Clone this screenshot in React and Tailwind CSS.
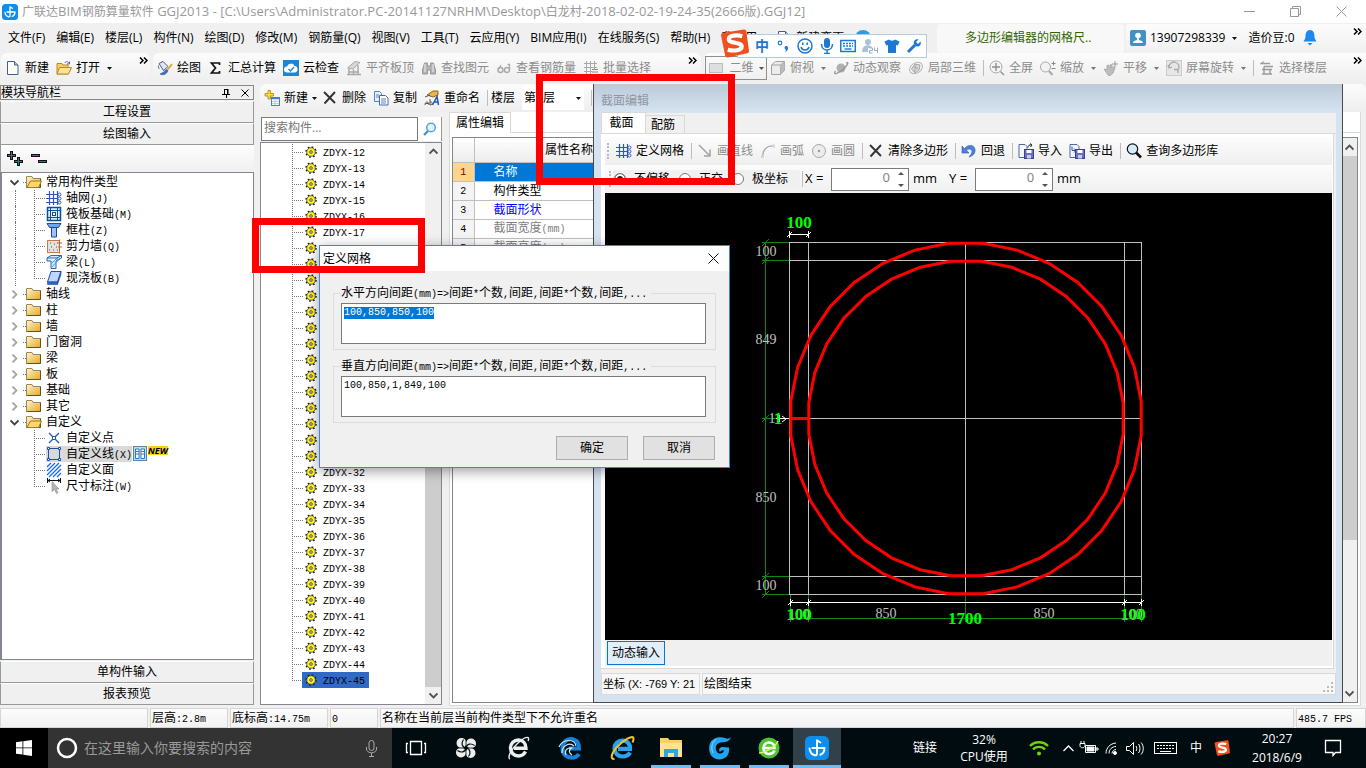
import React, { useEffect, useRef } from "react";

/* ---------- text ---------- */

// Chinese at 12px with half-width Latin runs, as in a bitmap system font.
function Sim({ children }) {
  const parts = String(children).match(/[\x20-\x7e]+|[^\x20-\x7e]+/g) || [];
  return (
    <span className="whitespace-pre">
      {parts.map((p, i) =>
        /^[\x20-\x7e]/.test(p) ? (
          <span key={i} className="font-['Liberation_Mono',monospace] text-[10px]">{p}</span>
        ) : (
          <span key={i}>{p}</span>
        )
      )}
    </span>
  );
}

/* ---------- icons ---------- */

function Svg({ children, size = 16, className = "" }) {
  return (
    <svg width={size} height={size} viewBox="0 0 16 16" fill="none" className={"shrink-0 " + className} aria-hidden="true">
      {children}
    </svg>
  );
}

const Caret = ({ color = "#111" }) => (
  <svg width="5" height="3" viewBox="0 0 5 3" className="shrink-0" aria-hidden="true">
    <path d="M0 0h5L2.5 3z" fill={color} />
  </svg>
);

const More = ({ label }) => (
  <button type="button" aria-label={label} className="mt-1 self-start">
    <svg width="9" height="7" viewBox="0 0 9 7" fill="none" stroke="#000" strokeWidth="1.5" aria-hidden="true">
      <path d="M1 .5l3 3-3 3M5 .5l3 3-3 3" />
    </svg>
  </button>
);

const AppLogo = ({ size = 16 }) => (
  <Svg size={size}>
    <rect width="16" height="16" rx="3.5" fill="#0a8fee" />
    <path d="M10.300 4.300L8 2.800v8.700c0 1-.6 1.500-1.500 1.300C4.500 12.300 3.200 10.500 3 8.300" stroke="#fff" strokeWidth="1.300" strokeLinecap="round" strokeLinejoin="round" />
    <path d="M5 8h8c0 2.200-1 3.800-2.800 4.500" stroke="#fff" strokeWidth="1.300" strokeLinecap="round" strokeLinejoin="round" />
  </Svg>
);

const NewDoc = () => (
  <Svg>
    <path d="M2.500 1.500h7l3.500 3.500v9.500h-10.500z" fill="#fff" stroke="#41608f" />
    <path d="M9.500 1.500v3.500h3.500" fill="#b7c9e6" stroke="#41608f" />
  </Svg>
);

const OpenDoc = () => (
  <Svg>
    <path d="M1 3.500h5l1 1.500h5v9H1z" fill="#f6d06a" stroke="#b98a1e" />
    <path d="M1 14l2.500-6.500H15.500L12.500 14z" fill="#ffe39a" stroke="#b98a1e" />
    <path d="M8.500 3c1.500-2 4-1.500 4.500.5M13.500 1.500v2.500h-2.500" stroke="#4b6ea8" />
  </Svg>
);

const PaintIcon = () => (
  <Svg>
    <path d="M2 3.500l4-2 5 5-4.500 4z" fill="#dfe7f3" stroke="#4a5d84" />
    <path d="M1.500 5.500c-.5 2 .5 3 1 3.500" stroke="#4a5d84" />
    <path d="M15 4l-5.500 7" stroke="#e0a63a" strokeWidth="2" />
    <path d="M3 14c2 1.500 6 1 8-3l-2-1.500c-2 3-4 3.500-6 4.500z" fill="#3e6fd0" stroke="#2b4e9b" strokeWidth=".6" />
  </Svg>
);

const Sigma = () => (
  <Svg>
    <path d="M11.500 5V3H3.500l4 5-4 5h8v-2" stroke="#111" strokeWidth="1.700" />
  </Svg>
);

const CloudCheck = () => (
  <Svg>
    <rect width="16" height="16" fill="#1d86d4" />
    <path d="M4 12.500a3 3 0 010-6 4 4 0 017.500-.5 3.300 3.300 0 01.5 6.500z" fill="#fff" />
    <path d="M5.500 9l2 2 3.500-4" stroke="#1d86d4" strokeWidth="1.300" />
  </Svg>
);

const G = "#a9a9a9";
const AlignSlab = () => (
  <Svg>
    <path d="M1.500 8L9 1.500l5 1L7 9z" fill="#d6d6d6" stroke={G} />
    <path d="M1 14.500h14M3 9v5M7.500 9.500v5M12 5v9M3 12h10" stroke={G} strokeWidth="1.500" />
  </Svg>
);
const Binoculars = () => (
  <Svg>
    <path d="M3.500 3h3v3h3V3h3l2 7v4h-5v-4h-3v4h-5v-4z" fill="#b3b3b3" stroke="#999" />
    <path d="M4 4v8M12 4v8" stroke="#eee" />
  </Svg>
);
const Glasses = () => (
  <Svg>
    <circle cx="4.500" cy="10" r="2.500" stroke={G} strokeWidth="1.400" />
    <circle cx="11" cy="10" r="2.500" stroke={G} strokeWidth="1.400" />
    <path d="M2 10l3-5M13.500 10V4.500h-2" stroke={G} strokeWidth="1.300" />
  </Svg>
);
const BatchSelect = () => (
  <Svg>
    <path d="M3.500 1v14M7.500 1v14M11.500 1v9M1 3.500h13M1 7.500h13M1 11.500h8" stroke={G} />
    <path d="M9 9.500h6M9 12h6M9 14.500h6" stroke="#888" />
  </Svg>
);
const FlatRect = () => (
  <Svg><rect x="1.500" y="3.500" width="13" height="9" fill="#dedede" stroke="#bcbcbc" /></Svg>
);
const CubeIcon = () => (
  <Svg>
    <path d="M1.500 5l4-3.500h9v9l-4 4h-9zM1.500 5h9v9.500M10.500 5l4-3.500" fill="#ececec" stroke="#a3a3a3" />
    <path d="M10.500 5l4-3.500v9l-4 4z" fill="#bbb" />
  </Svg>
);
const Planet = () => (
  <Svg>
    <circle cx="8" cy="8" r="4.500" fill="#b0b0b0" />
    <path d="M13 3c2-1 2.500 0 1 2-2.500 3.500-7 7-10.500 8.500-2 .8-2.500-.5-1-2.500" stroke="#979797" strokeWidth="1.300" />
  </Svg>
);
const Local3d = () => (
  <Svg>
    <ellipse cx="8" cy="8" rx="7" ry="5" transform="rotate(-35 8 8)" stroke="#b5b5b5" />
    <path d="M3.500 9l3.500-5 5 1-1 5-4 3z" fill="#d9d9d9" stroke={G} />
    <path d="M5 6.500l5 2M8 4.500L6.500 12" stroke={G} />
  </Svg>
);
const ZoomFit = () => (
  <Svg>
    <circle cx="7" cy="7" r="6" fill="#f4f4f4" stroke={G} />
    <path d="M7 3v8M3 7h8M11.500 11.500L15 15" stroke="#8e8e8e" strokeWidth="1.400" />
  </Svg>
);
const ZoomInOut = () => (
  <Svg>
    <circle cx="5.500" cy="7" r="5" fill="#f2f2f2" stroke={G} />
    <path d="M9 11l3.500 4" stroke={G} strokeWidth="2" />
    <path d="M11.500 3.500h4M13.500 1.500v4M11.500 8.500h4" stroke="#888" />
  </Svg>
);
const PanHand = () => (
  <Svg>
    <path d="M1 9l3 1V5.500l1.500-.5 1 3 1-3.500 1.500.5v3.500l2-2 1 1-2 5.500-3 2.500H5.500z" fill="#bdbdbd" stroke={G} />
    <path d="M12 1v6M9 4h6" stroke="#999" />
  </Svg>
);
const RotateScreen = () => (
  <Svg>
    <rect x=".5" y=".5" width="15" height="15" fill="#e6e6e6" stroke="#ccc" />
    <path d="M3 7a5 5 0 119 3M2 5l1 3 3-1M12 13v-3.500H8" stroke="#aaa" strokeWidth="1.300" />
  </Svg>
);
const Floors = () => (
  <Svg>
    <path d="M2 3.500h9M5 6.500h9M3 9.500h10M3 14h10M5 6.500v7M11 9.500v4" stroke="#9b9b9b" strokeWidth="1.400" />
    <path d="M5 1.500L1 4" stroke="#9b9b9b" />
  </Svg>
);
const AddItem = () => (
  <Svg>
    <path d="M4 .5h2.500v3H9.500V6H6.500v3H4V6H1V3.500h3z" fill="#ffd92e" stroke="#a8871a" strokeWidth=".8" />
    <rect x="7.500" y="7.500" width="8" height="8" fill="#fff" stroke="#4e7cc8" />
    <path d="M8 8.500h7" stroke="#4e7cc8" strokeWidth="1.500" />
    <path d="M8 11.500h7M8 13.500h7M11 10v5" stroke="#b8cdee" />
  </Svg>
);
const Cross = () => (
  <Svg>
    <path d="M2 2l11 11M13 2L2.500 13.500" stroke="#333" strokeWidth="1.900" />
  </Svg>
);
const CopyIcon = () => (
  <Svg>
    <path d="M1.500 1.500h5l2 2v8h-7z" fill="#e7f0fd" stroke="#5b83c4" />
    <path d="M6.500 5.500h6l2.500 2.500v7H6.500z" fill="#fff" stroke="#3f6bb5" />
    <path d="M8 9h5M8 11h5M8 13h5M3 5h3M3 7h3" stroke="#5b83c4" />
  </Svg>
);
const RenameIcon = () => (
  <Svg>
    <path d="M3 5l6-4h5v4L9 7z" fill="#e9b54a" stroke="#8a6720" />
    <path d="M1 7l5-2" stroke="#555" />
    <path d="M1 15c0-4 4-4 4 0M1.500 13.500h3.500M6 9v6c3 0 3-3.500 0-3" stroke="#555" />
    <path d="M8.500 15L13 6.500 14.500 15M10 12h4" stroke="#2457b8" strokeWidth="1.500" />
  </Svg>
);
const GridIcon = () => (
  <Svg>
    <path d="M3.500 1v14M7.500 1v14M11.500 1v14M0 4.500h12M0 8.500h12M0 12.500h12" stroke="#2d59b3" strokeWidth="1.200" />
    <circle cx="13.500" cy="4.500" r="1.500" fill="#fff" stroke="#2d59b3" />
    <circle cx="13.500" cy="8.500" r="1.500" fill="#fff" stroke="#2d59b3" />
    <circle cx="13.500" cy="12.500" r="1.500" fill="#fff" stroke="#2d59b3" />
  </Svg>
);
const LineIcon = () => (
  <Svg><path d="M2 2l10 10M13 6.500V13H7" stroke="#a3a3a3" strokeWidth="1.500" /></Svg>
);
const ArcIcon = () => (
  <Svg>
    <path d="M2.500 13.500C2.500 7 7 2.500 13 3" stroke="#a8a8a8" strokeWidth="1.300" />
    <path d="M1 12h3v3H1zM12 1.500h3v3h-3z" fill="#d5d5d5" />
  </Svg>
);
const CircleIcon = () => (
  <Svg><circle cx="8" cy="8" r="6.500" fill="#ececec" stroke="#a8a8a8" /><circle cx="8" cy="8" r="1.200" fill="#999" /></Svg>
);
const UndoIcon = () => (
  <Svg>
    <path d="M1 3v7h7L5.500 7.500C8 5 11 6 11 8.500c0 2-1.500 3.500-3 5.500 4-1 6.500-4 6-7.500C13.500 2 7.500.5 3.500 5.500z" fill="#4d7fe0" stroke="#2c56a8" strokeWidth=".6" />
  </Svg>
);
const Disk = () => (
  <>
    <rect x="6.500" y="6.500" width="9" height="9" fill="#6a6fc4" stroke="#3a3f8f" />
    <path d="M8.500 7h5v3h-5z" fill="#fff" />
    <path d="M9 12h4v3.500H9z" fill="#c9cdf2" />
  </>
);
const ImportIcon = () => (
  <Svg>
    <path d="M1 1.500h6l2 2v11H1z" fill="#f3f7ff" stroke="#4d679b" />
    <Disk />
    <path d="M10 4.500c0-2 1.500-3 3.500-2.500M12 .5L14 2l-1.500 2" stroke="#223" />
  </Svg>
);
const ExportIcon = () => (
  <Svg>
    <path d="M1 1.500h7l2 2v11H1z" fill="#f3f7ff" stroke="#4d679b" />
    <path d="M3 3.500v4h3M5 5.500l2 2-2 2" stroke="#2b50a0" />
    <Disk />
  </Svg>
);
const LoupeIcon = () => (
  <Svg>
    <circle cx="6.500" cy="6" r="5.200" fill="#d5ecfb" stroke="#111" strokeWidth="1.200" />
    <path d="M10 9.500l5 5" stroke="#111" strokeWidth="2.600" />
  </Svg>
);
const Gear = () => (
  <svg width="12" height="12" viewBox="0 0 12 12" className="shrink-0" aria-hidden="true">
    <circle cx="6" cy="6" r="5" fill="none" stroke="#222" strokeWidth="1.600" strokeDasharray="1.700 2.227" />
    <circle cx="6" cy="6" r="4.300" fill="#fff01c" stroke="#333" strokeWidth=".7" />
    <circle cx="6" cy="6" r="1.300" fill="#fff" stroke="#222" strokeWidth=".8" />
  </svg>
);
const Folder = ({ open }) => (
  <Svg>
    <defs>
      <linearGradient id="folderFill" x1="0" y1="0" x2="1" y2="1">
        <stop offset="0" stopColor="#fff6cf" />
        <stop offset="1" stopColor="#e5a728" />
      </linearGradient>
    </defs>
    <path d="M.5 2.500h5.500l1 2h7.500v9H.5z" fill="url(#folderFill)" stroke="#9b8a5c" />
    <path d="M.5 13.500h14v-9" stroke="#6b5318" />
    {open && <path d="M1 13.500l3.500-6.500h11l-3 6.500z" fill="#ffd766" stroke="#9b7a2a" />}
  </Svg>
);

const typeIcons = {
  axis: <GridIcon />,
  raft: (
    <Svg>
      <rect x="1.500" y="1.500" width="13" height="13" fill="#e4edfb" stroke="#0f4f93" strokeWidth="1.500" />
      <path d="M4.500 2v12M11.500 2v12M2 4.500h12M2 11.500h12" stroke="#0f4f93" />
      <rect x="6.500" y="6.500" width="3" height="3" fill="#fff" stroke="#0f4f93" />
    </Svg>
  ),
  column: (
    <Svg>
      <path d="M1 1.500h14l-2.500 4h-9z" fill="#6fa4ee" stroke="#1d49a0" />
      <path d="M5.500 5.500h5v9.500h-5z" fill="#9cc1f7" stroke="#1d49a0" />
    </Svg>
  ),
  wall: (
    <Svg>
      <rect x="1.500" y="2.500" width="12" height="12" fill="#e2e2e2" stroke="#c8794a" />
      <path d="M4 5h1M8 6h1M5 9h1M10 9h1M7 12h1M3 12h1M11 5h1M11 12h1" stroke="#555" />
      <path d="M13.500 1.500v14M12 5h4M12 9h4" stroke="#c8622a" />
    </Svg>
  ),
  beam: (
    <Svg>
      <path d="M1 4l4-2.500h10.500L11 4zM11 4v3l4.500-3V1.500M1 4v3h4v7.500h5V7h1" fill="#d6e9fc" stroke="#2567b8" />
      <path d="M6 13l8-9M6 9l5-5" stroke="#4d93dc" />
    </Svg>
  ),
  slab: (
    <Svg>
      <path d="M5 1.500h10L11.500 12H1.500z" fill="#bcd7fb" stroke="#1f4fa8" />
      <path d="M1.500 12h10v2.500h-10zM11.500 12L15 1.500v3l-3.500 10z" fill="#2f66c8" stroke="#1f4fa8" strokeWidth=".6" />
    </Svg>
  ),
  point: (
    <Svg>
      <path d="M3 3l3.500 3.500M13 3L9.500 6.500M3 13l3.500-3.500M13 13L9.500 9.500" stroke="#1d5aa8" strokeWidth="1.300" />
      <rect x="6.500" y="6.500" width="3" height="3" fill="#fff" stroke="#1d5aa8" />
    </Svg>
  ),
  line: (
    <Svg>
      <path d="M2.500 2.500h11v11h-11z" stroke="#1b50b0" />
      <path d="M1.500 1.500h2v2h-2zM12.500 1.500h2v2h-2zM1.500 12.500h2v2h-2zM12.500 12.500h2v2h-2z" fill="#fff" stroke="#1b50b0" />
    </Svg>
  ),
  area: (
    <Svg>
      <path d="M1 5l4-4M1 9l8-8M1 13L13 1M3 15L15 3M7 15l8-8M11 15l4-4" stroke="#1e6fd8" strokeWidth="1.300" />
    </Svg>
  ),
  dim: (
    <Svg>
      <path d="M1.500 0v5M14.500 0v5M2 2.500h12M4 1L2 2.500 4 4M12 1l2 1.500L12 4" stroke="#111" />
      <path d="M6 3.500v10l2.500-2 2 4 1.500-1-2-3.500h3z" fill="#b5b5b5" stroke="#8a8a8a" strokeWidth=".6" />
    </Svg>
  ),
};

/* ---------- title, menus, main toolbar ---------- */

function TitleBar() {
  const title = "广联达BIM钢筋算量软件 GGJ2013 - [C:\\Users\\Administrator.PC-20141127NRHM\\Desktop\\白龙村-2018-02-02-19-24-35(2666版).GGJ12]";
  const parts = title.match(/[\x20-\x7e]+|[^\x20-\x7e]+/g);
  return (
    <header className="flex h-[23px] shrink-0 items-center gap-1 bg-white pl-0.5 text-[#999]">
      <AppLogo />
      <h1 className="flex-1 whitespace-pre text-xs">
        {parts.map((p, i) => (
          <span key={i} className={/^[\x20-\x7e]/.test(p) ? "text-[13px]" : "text-xs"}>{p}</span>
        ))}
      </h1>
      <div className="flex items-center gap-[35px] pr-[19px]">
        <button type="button" aria-label="最小化">
          <svg width="11" height="11" stroke="#999" fill="none"><path d="M0 5.500h11" /></svg>
        </button>
        <button type="button" aria-label="还原">
          <svg width="11" height="11" stroke="#999" fill="none"><path d="M.5 2.500h8v8h-8zM2.500 2.500v-2h8v8h-2" /></svg>
        </button>
        <button type="button" aria-label="关闭">
          <svg width="11" height="11" stroke="#999" fill="none"><path d="M.5.5l10 10M10.500.5l-10 10" /></svg>
        </button>
      </div>
    </header>
  );
}

const menus = ["文件(F)", "编辑(E)", "楼层(L)", "构件(N)", "绘图(D)", "修改(M)", "钢筋量(Q)", "视图(V)", "工具(T)", "云应用(Y)", "BIM应用(I)", "在线服务(S)", "帮助(H)"];

function MenuBar() {
  return (
    <div className="flex h-[30px] shrink-0 items-center text-xs">
      <nav className="flex w-[937px] items-center gap-[11px] whitespace-nowrap pl-2">
        {menus.map((m) => (
          <button key={m} type="button">{m}</button>
        ))}
        <button type="button">我要用</button>
        <button type="button" className="flex items-center gap-1 pl-2"><NewDoc />新建变更</button>
        <span className="h-4 w-4 rounded-full bg-[#2a9de0]" />
      </nav>
      <a href="#tip" className="mr-0.5 flex h-[29px] w-[187px] items-center whitespace-nowrap rounded bg-[#f8f8f8] pl-7 text-[#336600]">
        多边形编辑器的网格尺..
      </a>
      <div className="flex h-[29px] flex-1 items-center gap-[7px] rounded-l bg-linear-to-b from-[#fcfcfc] to-[#f0f0f0] pl-1">
        <span className="flex items-center gap-1">
          <Svg>
            <rect width="16" height="16" rx="2" fill="#3e92c4" />
            <circle cx="8" cy="5.500" r="2.800" fill="#fff" />
            <path d="M3 13c0-4 10-4 10 0zM7 8h2v2H7z" fill="#fff" />
          </Svg>
          13907298339
        </span>
        <Caret />
        <span className="pl-1">造价豆:0</span>
        <svg width="16" height="16" viewBox="0 0 16 16" aria-hidden="true">
          <path d="M8 0c3.500 0 4.500 3 4.500 7 0 2 1.500 3 2 4.500h-13C2 10 3.500 9 3.500 7 3.500 3 4.500 0 8 0z" fill="#1e88f0" />
          <path d="M5.500 13h5L8 15.500z" fill="#1e88f0" />
        </svg>
        <span className="flex flex-1 justify-end self-stretch pr-1"><More label="更多菜单" /></span>
      </div>
    </div>
  );
}

function Tool({ icon, children, dim, caret }) {
  return (
    <>
      <button type="button" className={"flex items-center gap-1 whitespace-nowrap " + (dim ? "text-[#8c8c8c]" : "text-black")}>
        {icon}
        {children}
      </button>
      {caret && <Caret color={dim ? "#777" : "#111"} />}
    </>
  );
}
const Sep = () => <span className="-mr-0.5 h-4 w-px shrink-0 bg-[#bdbdbd]" />;
const strip = "flex items-center gap-[7px] bg-linear-to-b from-[#fcfcfc] to-[#eeeeee]";

function MainToolbar() {
  return (
    <div className="mb-px flex h-[30px] shrink-0 gap-[3px] overflow-hidden pl-px text-xs">
      <div className={strip + " w-[149px] rounded-md pl-1 pr-0.5"}>
        <Tool icon={<NewDoc />}>新建</Tool>
        <Tool icon={<OpenDoc />} caret>打开</Tool>
        <span className="flex flex-1 justify-end self-stretch"><More label="更多文件工具" /></span>
      </div>
      <div className={strip + " w-[548px] rounded-md pl-1 pr-1"}>
        <Tool icon={<PaintIcon />}>绘图</Tool>
        <Tool icon={<Sigma />}>汇总计算</Tool>
        <Tool icon={<CloudCheck />}>云检查</Tool>
        <Tool icon={<AlignSlab />} dim>平齐板顶</Tool>
        <Tool icon={<Binoculars />} dim>查找图元</Tool>
        <Tool icon={<Glasses />} dim>查看钢筋量</Tool>
        <Tool icon={<BatchSelect />} dim>批量选择</Tool>
        <span className="flex flex-1 justify-end self-stretch"><More label="更多绘图工具" /></span>
      </div>
      <div className={strip + " flex-1 rounded-l-md pl-px pr-1"}>
        <button type="button" className="-mr-1 flex h-6 w-[62px] shrink-0 items-center justify-between whitespace-nowrap border border-[#8e8e8e] px-0.5 text-[#8c8c8c]">
          <FlatRect />二维<Caret color="#555" />
        </button>
        <Tool icon={<CubeIcon />} dim caret>俯视</Tool>
        <Tool icon={<Planet />} dim>动态观察</Tool>
        <Tool icon={<Local3d />} dim>局部三维</Tool>
        <Sep />
        <Tool icon={<ZoomFit />} dim>全屏</Tool>
        <Tool icon={<ZoomInOut />} dim caret>缩放</Tool>
        <Tool icon={<PanHand />} dim caret>平移</Tool>
        <Tool icon={<RotateScreen />} dim caret>屏幕旋转</Tool>
        <Sep />
        <Tool icon={<Floors />} dim>选择楼层</Tool>
        <span className="flex flex-1 justify-end self-stretch"><More label="更多视图工具" /></span>
      </div>
    </div>
  );
}

/* ---------- navigation panel ---------- */

const common = [
  ["轴网(J)", "axis"], ["筏板基础(M)", "raft"], ["框柱(Z)", "column"],
  ["剪力墙(Q)", "wall"], ["梁(L)", "beam"], ["现浇板(B)", "slab"],
];
const folders = ["轴线", "柱", "墙", "门窗洞", "梁", "板", "基础", "其它"];
const custom = [["自定义点", "point"], ["自定义线(X)", "line"], ["自定义面", "area"], ["尺寸标注(W)", "dim"]];

function Branch({ last }) {
  return (
    <svg width="12" height="16" className="shrink-0" stroke="#777" strokeDasharray="1 1" aria-hidden="true">
      <path d={last ? "M.5 0v8" : "M.5 0v16"} />
      <path d="M0 8.500h11" />
    </svg>
  );
}

function FolderRow({ open, children }) {
  return (
    <li className="flex h-4 items-center gap-1">
      <button type="button" className="flex items-center">
        <svg width="9" height="9" viewBox="0 0 9 9" fill="none" stroke={open ? "#404040" : "#a6a6a6"} strokeWidth="1.800" aria-hidden="true">
          <path d={open ? "M.5 2.500l4 4 4-4" : "M2.500.5l4 4-4 4"} />
        </svg>
        <span className="ml-1 w-[3px] border-t border-dotted border-[#777]" />
        <Folder open={open} />
      </button>
      <Sim>{children}</Sim>
    </li>
  );
}

function TypeRow({ label, icon, last, guide }) {
  const selected = icon === "line";
  return (
    <li className="flex h-4 items-center">
      <span className={"ml-[5px] mr-[18px] self-stretch border-l " + (guide ? "border-dotted border-[#777]" : "border-transparent")} />
      <Branch last={last} />
      <span className={"flex h-4 items-center gap-1 " + (selected ? "bg-[#d9d9d9]" : "")}>
        {typeIcons[icon]}
        <Sim>{label}</Sim>
      </span>
      {selected && (
        <>
          <Svg>
            <rect x="1.500" y=".5" width="13" height="14" fill="#b9dcf8" stroke="#64849c" />
            <path d="M3.500 3h3.500v9.500H3.500zM9 3h3.500v9.500H9z" fill="#fff" stroke="#1c7fd6" />
            <path d="M4 5.500h3M4 8h3M9.500 5.500h3M9.500 8h3" stroke="#1c7fd6" />
          </Svg>
          <span className="mb-2 bg-[#ffd21a] text-[9px] font-bold italic leading-[9px]">NEW</span>
        </>
      )}
    </li>
  );
}

const NavButton = ({ children }) => (
  <button type="button" className="h-[22px] shrink-0 border border-b-[#999] border-r-[#999] border-l-[#999] border-t-white bg-[#f0f0f0] text-center">
    {children}
  </button>
);

function NavPanel() {
  return (
    <aside className="flex w-[254px] shrink-0 flex-col pt-px text-xs">
      <div className="mb-px flex h-[15px] items-center justify-between border border-[#888] pr-1 leading-3">
        <h2>模块导航栏</h2>
        <span className="flex items-center gap-2.5">
          <svg width="9" height="10" stroke="#000" fill="none" aria-hidden="true"><path d="M2.500 1v5M2 1.500h4M6 1v5M0 6.500h8M4.500 6v4M5.500 1v5" /></svg>
          <svg width="8" height="8" stroke="#000" fill="none" aria-hidden="true"><path d="M.5.500l7 7M7.500.500l-7 7" /></svg>
        </span>
      </div>
      <NavButton>工程设置</NavButton>
      <NavButton>绘图输入</NavButton>
      <div className="flex h-[27px] shrink-0 items-center gap-2 border-l border-[#999] bg-linear-to-b from-[#fdfdfd] to-[#f0f0f0] pl-1.5">
        <button type="button" aria-label="展开全部">
          <svg width="16" height="15" aria-hidden="true"><path d="M4.500 0v9M0 4.500h9M11.500 6v9M7 10.500h9" stroke="#111" strokeWidth="3" /><path d="M4.500 1v7M1 4.500h7M11.500 7v7M8 10.500h7" stroke="#0a8a80" /></svg>
        </button>
        <button type="button" aria-label="折叠全部">
          <svg width="16" height="15" aria-hidden="true"><path d="M0 4.500h9M7 10.500h9" stroke="#111" strokeWidth="3" /><path d="M1 4.500h7M8 10.500h7" stroke="#0a8a80" /></svg>
        </button>
      </div>
      <ul className="flex-1 overflow-hidden border-2 border-[#828790] border-y border-r bg-white pl-2 pt-px">
        <FolderRow open>常用构件类型</FolderRow>
        {common.map(([l, i], n) => <TypeRow key={l} label={l} icon={i} guide last={n === common.length - 1} />)}
        {folders.map((f) => <FolderRow key={f}>{f}</FolderRow>)}
        <FolderRow open>自定义</FolderRow>
        {custom.map(([l, i], n) => <TypeRow key={l} label={l} icon={i} last={n === custom.length - 1} />)}
      </ul>
      <div className="mb-px mt-px flex flex-col">
        <NavButton>单构件输入</NavButton>
        <NavButton>报表预览</NavButton>
      </div>
    </aside>
  );
}

/* ---------- component list and property table ---------- */

function Chevron({ down }) {
  return (
    <svg width="9" height="9" viewBox="0 0 9 9" fill="none" stroke="#505050" strokeWidth="1.800" aria-hidden="true">
      <path d={down ? "M.5 2.500l4 4 4-4" : "M.5 6.500l4-4 4 4"} />
    </svg>
  );
}

function ListToolbar() {
  return (
    <div className={strip + " h-7 shrink-0 rounded-md pl-1 text-xs"}>
      <button type="button" className="-mr-0.5 flex items-center gap-1"><AddItem />新建<Caret /></button>
      <Tool icon={<Cross />}>删除</Tool>
      <Tool icon={<CopyIcon />}>复制</Tool>
      <Tool icon={<RenameIcon />}>重命名</Tool>
      <Sep />
      <label htmlFor="floor" className="-ml-0.5">楼层</label>
      <span className="flex h-6 w-[62px] items-center bg-white">
        <select id="floor" defaultValue="第2层" className="w-[54px] appearance-none bg-white pl-0.5 outline-none">
          <option>第1层</option>
          <option>第2层</option>
          <option>第3层</option>
        </select>
        <Caret />
      </span>
      <Sep />
    </div>
  );
}

const components = Array.from({ length: 34 }, (_, i) => "ZDYX-" + (12 + i));

function ComponentList() {
  return (
    <section className="flex w-[182px] shrink-0 flex-col pb-px text-xs">
      <div className="mb-px mt-[5px] flex h-6 shrink-0 border-r border-[#999]">
        <input aria-label="搜索构件" placeholder="搜索构件..." className="ml-px w-[157px] border border-[#7a7a7a] bg-white px-0.5 pb-0.5 outline-none placeholder:text-[#777]" />
        <button type="button" aria-label="搜索" className="flex flex-1 items-center justify-center bg-white">
          <svg width="14" height="14" viewBox="0 0 14 14" fill="none" aria-hidden="true">
            <circle cx="8" cy="5.500" r="4.300" fill="#e3f2fc" stroke="#5aa3d8" strokeWidth="1.500" />
            <path d="M5 9l-4 4" stroke="#3f8ccb" strokeWidth="2.200" />
          </svg>
        </button>
      </div>
      <div className="flex min-h-0 flex-1 border border-[#828790] bg-white">
        <ul className="flex-1 overflow-hidden pl-[31px] pt-px">
          {components.map((c, n) => {
            const last = n === components.length - 1;
            return (
              <li key={c} className="flex h-4 items-center">
                <Branch last={last} />
                <span className={"flex h-4 items-center gap-1.5 pr-1 " + (last ? "-ml-0.5 bg-[#316ac5] pl-[3px]" : "pl-px")}>
                  <Gear />
                  <Sim>{c}</Sim>
                </span>
              </li>
            );
          })}
        </ul>
        <div className="flex w-4 flex-col items-center bg-[#f0f0f0]">
          <span className="flex h-[17px] items-center"><Chevron /></span>
          <span className="flex-1" />
          <span className="h-[240px] w-full bg-[#cdcdcd]" />
          <span className="flex h-[17px] items-center"><Chevron down /></span>
        </div>
      </div>
    </section>
  );
}

const props = [
  ["名称", "text-white"], ["构件类型", "text-black"], ["截面形状", "text-[#0000ff]"],
  ["截面宽度(mm)", "text-[#808080]"], ["截面高度(mm)", "text-[#808080]"], ["轴线距左边线距离(mm)", "text-black"],
  ["其它钢筋", "text-black"], ["备注", "text-black"],
];

function PropertyPanel() {
  return (
    <section className="flex min-w-0 flex-1 flex-col pr-[5px] text-xs">
      <div className="flex h-[21px] shrink-0 bg-white">
        <h2 className="flex w-[62px] items-center justify-center border border-b-0 border-[#d9d9d9]">属性编辑</h2>
        <span className="flex-1 border-b border-r border-[#d9d9d9]" />
      </div>
      <div className="flex flex-1 border border-t-0 border-[#d9d9d9] bg-white p-0.5 pt-1">
        <div className="flex flex-1 border border-[#828790]">
          <div className="flex-1">
            <table className="w-full table-fixed border-collapse">
              <thead>
                <tr className="h-6 bg-linear-to-b from-white to-[#ececec]">
                  <th className="w-[21px] border-b border-r border-[#c0c0c0]" />
                  <th className="w-[190px] border-b border-r border-[#c0c0c0] font-normal">属性名称</th>
                  <th className="border-b border-r border-[#c0c0c0] font-normal">属性值</th>
                </tr>
              </thead>
              <tbody>
                {props.map(([p, tone], i) => (
                  <tr key={p} className="h-[19px]">
                    <td className={"border-b border-r border-[#c0c0c0] text-center leading-4 " + (i === 0 ? "bg-[#ffd48c] text-[#800000]" : "bg-[#f4f4f4]")}><Sim>{i + 1}</Sim></td>
                    <td className={"border-b border-[#c0c0c0] pl-[19px] leading-4 " + tone + (i === 0 ? " bg-[#0078d7]" : "")}><Sim>{p}</Sim></td>
                    <td className="border-b border-l border-[#c0c0c0]" />
                  </tr>
                ))}
              </tbody>
            </table>
          </div>
          <div className="flex w-4 flex-col items-center bg-[#f0f0f0]">
            <span className="flex h-[18px] items-center"><Chevron /></span>
            <span className="h-[384px] w-full bg-[#cdcdcd]" />
            <span className="flex-1" />
            <span className="flex h-[18px] items-center"><Chevron down /></span>
          </div>
        </div>
      </div>
    </section>
  );
}

/* ---------- section editor ---------- */

function polygon(cx, cy, r, sides) {
  return Array.from({ length: sides }, (_, i) => {
    const a = ((i + 0.5) * 2 * Math.PI) / sides;
    return (cx + r * Math.cos(a)).toFixed(1) + "," + (cy + r * Math.sin(a)).toFixed(1);
  }).join(" ");
}

function Drawing() {
  return (
    <svg width="727" height="447" viewBox="605 193 727 447" fill="none" className="shrink-0" aria-label="截面图">
      <g stroke="#0a8a0a" shapeRendering="crispEdges">
        <path d="M765.500 243v352M762 242.500h28M762 260.500h28M762 418.500h28M762 576.500h28M762 594.500h28" />
        <path d="M790 618.500h352M790.500 595v27M808.500 595v27M965.500 595v27M1124.500 595v27M1141.500 595v27" />
      </g>
      <g stroke="#c0c0c0" shapeRendering="crispEdges">
        <path d="M790 242.500h352M790 260.500h352M790 418.500h352M790 576.500h352M790 594.500h352" />
        <path d="M789.500 242v353M808.500 242v353M965.500 242v353M1124.500 242v353M1141.500 242v353" />
      </g>
      <g stroke="#fff">
        <path d="M789 234.500h20M789.500 231v7M808.500 231v7M787 237l5-5M806 237l5-5" />
        <path d="M790 602.500h352M790.500 599v7M808.500 599v7M1124.500 599v7M1141.500 599v7M788 605l5-5M806 605l5-5M1122 605l5-5M1139 605l5-5" />
        <path d="M776 418.500h14M779.500 415v7M782 416l4 3-4 3" />
      </g>
      <g stroke="#0a8a0a">
        <path d="M762 246l7-7M762 264l7-7M762 422l7-7M762 580l7-7M762 598l7-7" />
      </g>
      <g stroke="#f00" strokeWidth="3">
        <polygon points={polygon(966, 418.5, 176, 32)} />
        <polygon points={polygon(966, 418.5, 158, 32)} />
        <path d="M790 418.500h18" />
      </g>
      <g fill="#c0c0c0" fontFamily="Liberation Serif, serif" fontSize="14" textAnchor="middle">
        <text x="766" y="256">100</text>
        <text x="766" y="344">849</text>
        <text x="772" y="423">1</text>
        <text x="766" y="502">850</text>
        <text x="766" y="590">100</text>
        <text x="799" y="619">100</text>
        <text x="886" y="618">850</text>
        <text x="1044" y="618">850</text>
        <text x="1132" y="619">100</text>
      </g>
      <g fill="#00ff00" fontFamily="Liberation Serif, serif" fontWeight="bold" fontSize="17" textAnchor="middle">
        <text x="799" y="228">100</text>
        <text x="778" y="424">1</text>
        <text x="799" y="620">100</text>
        <text x="965" y="624">1700</text>
        <text x="1133" y="620">100</text>
      </g>
    </svg>
  );
}

function Radio({ id, children, checked }) {
  return (
    <label htmlFor={id} className="flex items-center gap-2 whitespace-nowrap">
      <input id={id} type="radio" name="offset" defaultChecked={checked} className="h-3 w-3 appearance-none rounded-full border border-[#777] bg-white checked:bg-[#222] checked:shadow-[inset_0_0_0_2px_white]" />
      {children}
    </label>
  );
}

function Coord({ id, label }) {
  return (
    <span className="flex items-center gap-1">
      <label htmlFor={id} className="w-[22px] whitespace-pre text-[13px]">{label}</label>
      <span className="flex h-[23px] w-[78px] items-center border border-[#7a7a7a] bg-white pr-1">
        <input id={id} defaultValue="0" className="w-full min-w-0 bg-transparent pb-0.5 pr-2 text-right text-[13px] text-[#808080] outline-none" />
        <svg width="6" height="17" className="shrink-0" fill="#555" aria-hidden="true"><path d="M0 4h6L3 1zM0 13h6l-3 3z" /></svg>
      </span>
      <span className="text-[13px]">mm</span>
    </span>
  );
}

const Grip = () => (
  <span className="h-4 w-0.5 border-l-2 border-dotted border-[#bbb]" />
);

function SectionEditor() {
  return (
    <section className="absolute bottom-[65px] left-[593px] right-[23px] top-[84px] flex flex-col overflow-hidden border-x border-b border-[#4a4a4a] bg-[#d7e2f0] text-xs">
      <h2 className="flex h-[29px] shrink-0 items-center bg-linear-to-b from-[#bccad8] to-[#d7e4f2] pl-[7px] pt-1 text-[#8f979f]">截面编辑</h2>
      <div className="mb-[7px] ml-[7px] mr-1.5 flex min-h-0 flex-1 flex-col bg-[#f0f0f0]">
        <div className="flex h-[21px] shrink-0 items-end border-b border-[#d9d9d9]">
          <button type="button" className="h-[21px] w-[45px] border border-b-0 border-[#d9d9d9] bg-white pr-1">截面</button>
          <button type="button" className="h-[18px] w-[39px] border border-b-0 border-l-0 border-[#d9d9d9] pr-1">配筋</button>
        </div>
        <div className="mr-0.5 flex min-h-0 flex-1 flex-col border-b border-r border-[#d9d9d9] bg-white pb-0.5 pl-1 pr-px pt-[3px]">
          <div className={strip + " h-7 shrink-0 pl-0.5"}>
            <Grip />
            <Tool icon={<GridIcon />}>定义网格</Tool>
            <Sep />
            <Tool icon={<LineIcon />} dim>画直线</Tool>
            <Tool icon={<ArcIcon />} dim>画弧</Tool>
            <Tool icon={<CircleIcon />} dim>画圆</Tool>
            <Sep />
            <Tool icon={<Cross />}>清除多边形</Tool>
            <Sep />
            <Tool icon={<UndoIcon />}>回退</Tool>
            <Sep />
            <Tool icon={<ImportIcon />}>导入</Tool>
            <Tool icon={<ExportIcon />}>导出</Tool>
            <Sep />
            <Tool icon={<LoupeIcon />}>查询多边形库</Tool>
          </div>
          <div className="flex h-7 shrink-0 items-center bg-linear-to-b from-[#fcfcfc] to-[#f0f0f0] pl-1">
            <Grip />
            <div className="ml-0.5 mr-0.5 flex h-[18px] w-[187px] items-center gap-[9px] bg-[#f0f0f0] pl-px">
              <Radio id="none" checked>不偏移</Radio>
              <Radio id="ortho">正交</Radio>
              <Radio id="polar">极坐标</Radio>
            </div>
            <Sep />
            <div className="flex gap-3 pl-1">
              <Coord id="cx" label="X =" />
              <Coord id="cy" label="Y =" />
            </div>
          </div>
          <div className="min-h-0 flex-1 overflow-hidden bg-black">
            <Drawing />
          </div>
          <div className="flex h-[26px] shrink-0 items-center bg-[#f0f0f0] pl-0.5">
            <button type="button" className="h-6 w-[58px] border border-[#0078d7] bg-[#e2eef8]">动态输入</button>
          </div>
        </div>
        <div className="mt-1 flex h-[22px] shrink-0 gap-0.5 bg-[#f7f7f7] leading-5">
          <span className="w-[99px] whitespace-nowrap border border-[#d9d9d9] pl-px font-['Liberation_Sans','Noto_Sans_CJK_SC',sans-serif] text-[11px]">坐标 (X: -769 Y: 21</span>
          <span className="flex flex-1 items-end justify-between border border-[#d9d9d9] pl-px">
            绘图结束
            <svg width="12" height="12" fill="#bbb" aria-hidden="true"><path d="M8 0h2v2H8zM4 4h2v2H4zM8 4h2v2H8zM0 8h2v2H0zM4 8h2v2H4zM8 8h2v2H8z" /></svg>
          </span>
        </div>
      </div>
    </section>
  );
}

/* ---------- grid dialog ---------- */

function GridField({ id, label, value, inputRef }) {
  return (
    <fieldset className="h-[64px] border border-[#dcdcdc] pl-[7px] pr-[9px]">
      <legend className="h-3.5 pr-1 leading-3.5">
        <label htmlFor={id}><Sim>{label}</Sim></label>
      </legend>
      <textarea
        id={id}
        ref={inputRef}
        defaultValue={value}
        spellCheck={false}
        className="mt-[3px] block h-[41px] w-full resize-none border border-[#7a7a7a] bg-white px-0.5 py-[3px] font-['Liberation_Mono',monospace] text-[10px] leading-3 outline-none selection:bg-[#0078d7] selection:text-white"
      />
    </fieldset>
  );
}

function GridDialog() {
  const first = useRef(null);
  useEffect(() => {
    first.current.focus();
    first.current.select();
  }, []);
  return (
    <div role="dialog" aria-label="定义网格" className="absolute left-[319px] top-[245px] w-[411px] border border-[#3c87d8] bg-[#f0f0f0] text-xs shadow-[0_3px_12px_rgba(0,0,0,0.4)]">
      <div className="flex h-[25px] items-center justify-between bg-white pl-[3px] pr-2.5">
        <h2>定义网格</h2>
        <button type="button" aria-label="关闭">
          <svg width="11" height="11" stroke="#111" fill="none" aria-hidden="true"><path d="M.5.500l10 10M10.500.500l-10 10" /></svg>
        </button>
      </div>
      <div className="flex flex-col gap-[9px] px-[13px] pt-[15px]">
        <GridField id="gh" label="水平方向间距(mm)=>间距*个数,间距,间距*个数,间距,..." value="100,850,850,100" inputRef={first} />
        <GridField id="gv" label="垂直方向间距(mm)=>间距*个数,间距,间距*个数,间距,..." value="100,850,1,849,100" />
      </div>
      <div className="flex justify-end gap-[15px] pb-[7px] pr-3.5 pt-[13px]">
        <button type="button" className="h-6 w-[72px] border border-[#adadad] bg-[#e1e1e1]">确定</button>
        <button type="button" className="h-6 w-[72px] border border-[#adadad] bg-[#e1e1e1]">取消</button>
      </div>
    </div>
  );
}

/* ---------- input method bar ---------- */

const SogouMark = ({ size }) => (
  <svg width={size} height={size} viewBox="0 0 28 28" className="shrink-0" aria-hidden="true">
    <path d="M4 3.500L23 .5q2-.2 2.400 1.500L28 21q.2 2-1.700 2.500L7.500 27.500q-2 .3-2.500-1.600L1 6q-.3-2 3-2.500z" fill="#f0501e" />
    <path d="M21.500 7c-5-1.500-13-1-13 2.800C8.500 14.500 21 12 21 17c0 4-8 4.500-13.500 3" fill="none" stroke="#fff" strokeWidth="4" />
  </svg>
);

function ImeBar() {
  return (
    <div className="absolute left-[720px] top-[29px] flex items-center">
      <div className="z-10"><SogouMark size={29} /></div>
      <div className="-ml-3 mt-1 flex h-6 w-[190px] items-center justify-between border border-[#b4cbe0] bg-white pl-[17px] pr-1 text-[#1e78d2]">
        <span className="text-sm font-bold">中</span>
        <Svg><circle cx="5" cy="5" r="1.800" stroke="#1e78d2" strokeWidth="1.200" /><path d="M10 8.500c2-1.500 4 1 2.500 3.500-.5 1-1.500 1.500-2.500 2 1-1.500 1-2 .5-2.800-1-.5-1.200-2-.5-2.700z" fill="#1e78d2" /></Svg>
        <Svg><circle cx="8" cy="8" r="7" stroke="#1e78d2" strokeWidth="1.500" /><path d="M5 4.500h1.500V7H5zM9.500 4.500H11V7H9.500z" fill="#1e78d2" /><path d="M4 9c1 4 7 4 8 0" stroke="#1e78d2" strokeWidth="1.500" /></Svg>
        <Svg><rect x="5" y="0" width="6" height="10" rx="3" fill="#1e78d2" /><path d="M2.500 6c0 8 11 8 11 0M8 12v3.500M5 15.500h6" stroke="#1e78d2" strokeWidth="1.500" /></Svg>
        <Svg><rect x=".8" y="2.500" width="14.500" height="11" stroke="#1e78d2" strokeWidth="1.500" /><path d="M3 5.500h10M3 8h10" stroke="#1e78d2" strokeWidth="1.400" strokeDasharray="2 1" /><path d="M4.500 11h7" stroke="#1e78d2" strokeWidth="1.400" /></Svg>
        <Svg><circle cx="6" cy="4" r="3" fill="#abc1d8" /><path d="M0 14c0-8 9-8 10-4H6v4z" fill="#abc1d8" /><path d="M7.500 10h3v2.500h-3V15h3M12.500 9.500v3H15.500M15.500 9.500V15" stroke="#96afc9" /></Svg>
        <Svg><path d="M5 1.500c1 1.500 5 1.500 6 0l4.500 2L14 7.500l-2-.500v8H4V7l-2 .5L.5 3.500z" fill="#1e78d2" /></Svg>
        <Svg><path d="M2 14l7-7" stroke="#1e78d2" strokeWidth="3" /><path d="M14.500 3.500L12 6l-2-2 2.500-2.500C9.500.5 7 3 8 6s5 3.500 6.500.5c.5-1 .5-2 0-3z" fill="#1e78d2" /></Svg>
      </div>
    </div>
  );
}

/* ---------- status bar and taskbar ---------- */

const cell = "flex items-center overflow-hidden border border-[#d5d5d5] bg-linear-to-b from-[#fdfdfd] to-[#f1f1f1] pl-px ";

function StatusBar() {
  return (
    <footer className="flex h-5 shrink-0 gap-0.5 text-xs">
      <span className={cell + "w-[148px]"} />
      <span className={cell + "w-[78px]"}><Sim>层高:2.8m</Sim></span>
      <span className={cell + "w-[98px]"}><Sim>底标高:14.75m</Sim></span>
      <span className={cell + "w-12"}><Sim>0</Sim></span>
      <span className={cell + "flex-1"}><Sim>名称在当前层当前构件类型下不允许重名</Sim></span>
      <span className={cell + "w-[70px]"}><Sim>485.7 FPS</Sim></span>
    </footer>
  );
}

function TaskIcon({ label, children, running, active }) {
  return (
    <button type="button" aria-label={label} className={"flex items-center justify-center self-stretch " + (running ? "w-[49px]" : active ? "w-12 border-b-3 border-[#76b9ed] bg-[#32404a] pt-[3px]" : "w-12")}>
      <span className={"flex h-10 w-10 items-center justify-center " + (running ? "border-b-3 border-[#76b9ed] pt-[3px]" : "")}>{children}</span>
    </button>
  );
}

function TaskSvg({ children }) {
  return <svg width="26" height="26" viewBox="0 0 26 26" fill="none" aria-hidden="true">{children}</svg>;
}

function Taskbar() {
  return (
    <div className="flex h-10 shrink-0 items-center bg-[#010c10] text-white">
      <button type="button" aria-label="开始" className="flex w-12 items-center justify-center self-stretch bg-black">
        <svg width="16" height="16" viewBox="0 0 16 16" fill="#fff" aria-hidden="true"><path d="M0 2.200l6.500-.9v6.200H0zM7.300 1.200L16 0v7.500H7.300zM0 8.300h6.500v6.300L0 13.700zM7.300 8.300H16V16l-8.700-1.200z" /></svg>
      </button>
      <div className="flex w-[344px] items-center gap-1.5 self-stretch bg-[#333] pl-2 pr-3.5">
        <svg width="22" height="22" fill="none" stroke="#fff" strokeWidth="2.500" className="shrink-0" aria-hidden="true"><circle cx="11" cy="11" r="9" /></svg>
        <input aria-label="搜索" placeholder="在这里输入你要搜索的内容" className="min-w-0 flex-1 bg-transparent text-sm outline-none placeholder:text-[#999]" />
        <svg width="13" height="17" viewBox="0 0 13 17" fill="none" stroke="#aaa" aria-hidden="true"><rect x="4" y=".500" width="5" height="10" rx="2.500" /><path d="M1.500 7v2c0 5 10 5 10 0V7M6.500 13v3.500M4 16.500h5" /></svg>
      </div>
      <TaskIcon label="任务视图">
        <TaskSvg><path d="M7.500 6.500h11v13h-11zM5 8.500H3.500v9H5M21 8.500h1.500v9H21" stroke="#fff" strokeWidth="1.300" /></TaskSvg>
      </TaskIcon>
      <span className="w-0.5" />
      <TaskIcon label="应用">
        <TaskSvg>
          <g fill="#eee">
            <circle cx="8.500" cy="8" r="5" />
            <circle cx="18" cy="8.500" r="5" />
            <circle cx="17.500" cy="18" r="5" />
            <circle cx="8" cy="17.500" r="5" />
          </g>
          <path d="M13 13C8.500 12 8 8 10.500 4.500M13 13C14 8.500 18 8 21.500 10.500M13 13C17.500 14 18 18 15.500 21.500M13 13C12 17.500 8 18 4.500 15.500" stroke="#010c10" strokeWidth="1.200" />
          <path d="M13 2v22M2 13h22" stroke="#010c10" strokeWidth=".8" />
        </TaskSvg>
      </TaskIcon>
      <span className="w-1" />
      <TaskIcon label="浏览器">
        <TaskSvg>
          <path d="M20.500 16.500c-1.500 3-4 4.500-7 4.500-4.500 0-8-3.500-8-8s3.500-8 8-8 7.500 3.500 7.500 8.200H9" stroke="#eee" strokeWidth="3.400" />
          <path d="M5 24c-3-1 1-10 8-16C17 4 22 1 23.500 3c.5 1 0 2-.5 3" stroke="#eee" strokeWidth="1.400" />
        </TaskSvg>
      </TaskIcon>
      <span className="w-1" />
      <TaskIcon label="高速浏览器">
        <TaskSvg>
          <path d="M22 19c-2 3-5 4-8 3.500-6-.5-9-5-8.500-10C6 7 10 3.500 14.500 4c5 .5 8 4.500 7.500 9.500H12" stroke="#1684dc" strokeWidth="4" />
          <path d="M2 12C6 3 18 4 19 11M5 18c0-8 8-11 12-7M9 20c-2-5 2-8 6-7-4 2-3 5 0 7" stroke="#cfe6f8" strokeWidth="1.200" />
        </TaskSvg>
      </TaskIcon>
      <span className="w-1" />
      <TaskIcon label="IE">
        <TaskSvg>
          <path d="M21 17.500c-1.500 3-4 4-7.500 4-4.500 0-8-3.500-8-8s3.500-8 8-8 8 3.500 7.500 8.300H9" stroke="#2ba2ea" strokeWidth="4.200" />
          <path d="M5.500 24c-5 .5-3-6 3-12.500C15 5 23 0 24.500 3c.4 1.500-.3 3-1 4.500" stroke="#f6c42c" strokeWidth="2" />
        </TaskSvg>
      </TaskIcon>
      <TaskIcon label="资源管理器" running>
        <TaskSvg>
          <path d="M2 3h8l1.500 2H24v17H2z" fill="#f7d06b" />
          <path d="M2 8h22v14H2z" fill="#ffe394" />
          <path d="M6 22v-8h14v8h-4v-4h-6v4z" fill="#2fa5de" />
        </TaskSvg>
      </TaskIcon>
      <TaskIcon label="G浏览器" running>
        <TaskSvg>
          <path d="M24 2c-2 2-4 2-6 1C12 1 4 3 2.500 10 1 17 4 24 12 24.500c7 0 11-5 10-12l-7-.5c-3 .5-3.500 3-2 5 1-1.500 2.500-2 4-1.500-.5 3.500-5 4-7 1.500C7.500 13 9 8 13.500 7.500c4-.5 8 .5 10.500-5.500z" fill="#22a4ef" />
          <path d="M9 4.500C5 7 3.500 13 6 18" stroke="#8ed7ff" />
        </TaskSvg>
      </TaskIcon>
      <TaskIcon label="安全浏览器" running>
        <TaskSvg>
          <circle cx="13" cy="13" r="10.500" fill="#4cc22f" />
          <path d="M18.500 15.500c-1 2.500-3 3.500-5.500 3.500-3.500 0-5.500-2.500-5.500-6S10 7.500 13 7.500s5.500 2 5.500 5.500H9" stroke="#fff" strokeWidth="2.600" />
          <path d="M3 18C8 18 20 12 22 6" stroke="#d8f46b" strokeWidth="1.500" />
        </TaskSvg>
      </TaskIcon>
      <TaskIcon label="钢筋算量" active><AppLogo size={24} /></TaskIcon>
      <span className="flex-1" />
      <div className="flex items-center text-xs">
        <span className="w-[46px] whitespace-nowrap">链接</span>
        <span className="w-[50px] whitespace-nowrap text-center leading-[17px]">32%<br />CPU使用</span>
        <svg width="54" height="18" viewBox="0 0 54 18" fill="none" aria-hidden="true">
          <path d="M21 7c5-5 13-5 18 0M24 10.500c3-3.500 9-3.500 12 0" stroke="#6ed40c" strokeWidth="2.400" /><circle cx="30" cy="14.500" r="2" fill="#6ed40c" />
        </svg>
        <svg width="86" height="18" viewBox="2 0 86 18" fill="none" stroke="#fff" aria-hidden="true">
          <path d="M.5 12l5-5 5 5" strokeWidth="1.300" transform="translate(2 0)" />
          <path d="M24.500 6.500h10v7h-10zM35 9h2v2h-2zM19 4.500h5v2c0 3-5 3-5 0zM20 2v2M23 2v2" /><path d="M26 8h7v4h-7z" fill="#fff" />
          <path d="M45 14.500C45 9 49 4.500 55 4M48 14.500c0-4 3-7 7-7M51 14.500c0-2 2-4 4-4" /><circle cx="54" cy="14" r="1.500" fill="#fff" />
          <path d="M65.500 7.500h3l4-4v12l-4-4h-3zM75 7c1 1 1 4 0 5M77.500 5c2 2 2 7 0 9M80 3.500c3 3 3 9 0 12" />
        </svg>
        <svg width="29" height="18" viewBox="0 0 29 18" fill="none" stroke="#fff" aria-hidden="true">
          <rect x="5.500" y="3.500" width="22" height="11" /><path d="M8 6.500h17M8 9.500h17" strokeDasharray="2 1" /><path d="M11 12.500h11" />
        </svg>
        <span className="w-[36px] text-center">中</span>
        <SogouMark size={16} />
        <span className="w-[94px] whitespace-nowrap text-center leading-[19px]">20:27<br />2018/6/9</span>
        <button type="button" aria-label="通知" className="mr-6">
          <svg width="18" height="18" viewBox="0 0 18 18" fill="none" stroke="#fff" strokeWidth="1.300" aria-hidden="true"><path d="M1.500 1.500h15v12h-5l-2.500 3v-3h-7.500z" /></svg>
        </button>
      </div>
    </div>
  );
}

export default function App() {
  return (
    <div className="relative flex h-screen flex-col overflow-hidden bg-[#f0f0f0] font-['Open_Sans','Noto_Sans_CJK_SC',sans-serif] text-black">
      <TitleBar />
      <MenuBar />
      <MainToolbar />
      <main className="flex min-h-0 flex-1 gap-1.5 pb-0.5">
        <NavPanel />
        <div className="flex min-w-0 flex-1 flex-col">
          <ListToolbar />
          <div className="flex min-h-0 flex-1 gap-[7px]">
            <ComponentList />
            <PropertyPanel />
          </div>
        </div>
      </main>
      <StatusBar />
      <Taskbar />
      <SectionEditor />
      <GridDialog />
      <ImeBar />
      <div className="pointer-events-none absolute left-[252px] top-[218px] h-[55px] w-[173px] border-[7px] border-[#ff0000]" />
      <div className="pointer-events-none absolute left-[536px] top-[74px] h-[111px] w-[199px] border-[7px] border-[#ff0000]" />
    </div>
  );
}
